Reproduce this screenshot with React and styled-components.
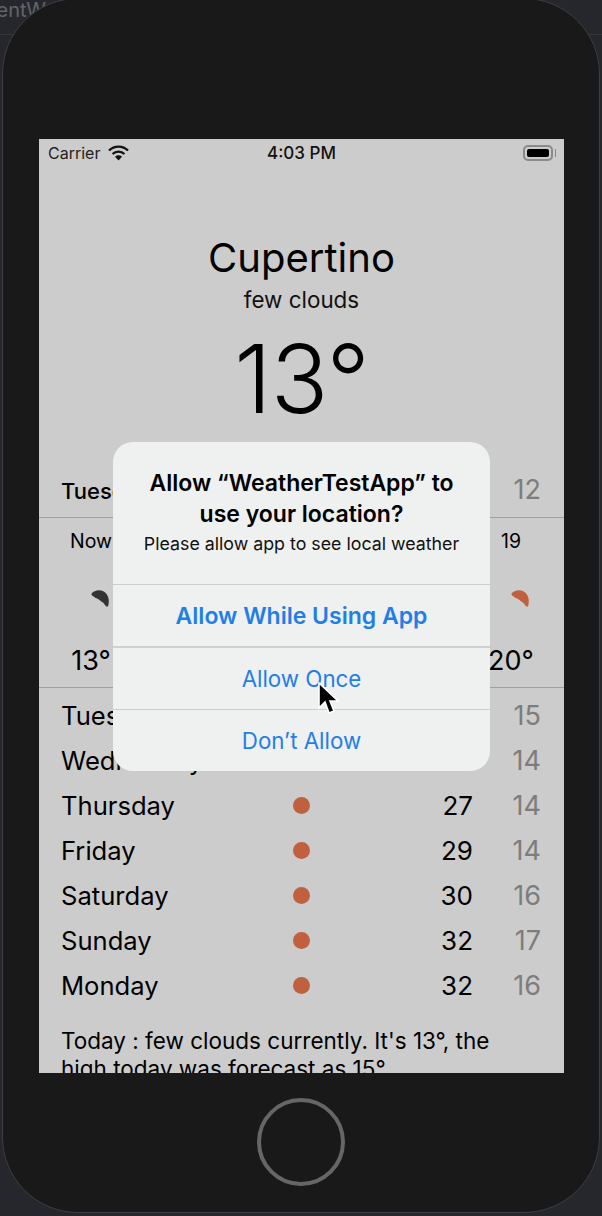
import React from "react";
import styled, { createGlobalStyle } from "styled-components";

const GlobalStyle = createGlobalStyle`
    html, body {
        margin: 0;
        padding: 0;
        background: #25272c;
    }
    * {
        box-sizing: border-box;
    }
`;

const Desktop = styled.div`
    position: relative;
    width: 602px;
    height: 1216px;
    overflow: hidden;
    background: #25272c;
    font-family: Inter, "Liberation Sans", sans-serif;
`;

const WindowTitle = styled.div`
    height: 35px;
    margin-left: -45px;
    border-bottom: 1px solid #34363b;
    color: #62656b;
    font-size: 20px;
    line-height: 21px;
    white-space: nowrap;
`;

const Phone = styled.div`
    position: absolute;
    top: -2px;
    left: 2px;
    width: 598px;
    height: 1215px;
    border: 1.5px solid #3c3e42;
    border-radius: 76px;
    background: #191919;
    display: flex;
    flex-direction: column;
    align-items: center;
    padding-top: 139.5px;
`;

const Screen = styled.div`
    position: relative;
    width: 525px;
    height: 934px;
    margin-left: 1px;
    overflow: hidden;
    background: #cccccc;
    color: #000;
`;

const StatusBar = styled.div`
    display: grid;
    grid-template-columns: 1fr auto 1fr;
    align-items: center;
    height: 28px;
    padding: 0 9px;
`;

const Carrier = styled.div`
    display: flex;
    align-items: center;
    gap: 8px;
    color: #222;
    font-size: 16px;
`;

const Clock = styled.div`
    font-size: 17px;
    font-weight: 500;
    color: #111;
`;

const Battery = styled.div`
    position: relative;
    justify-self: end;
    width: 30px;
    height: 16px;
    padding: 2px;
    border: 2px solid #8a8a8a;
    border-radius: 5px;
    margin-right: 2px;
    &::before {
        content: "";
        display: block;
        height: 100%;
        border-radius: 2px;
        background: #000;
    }
    &::after {
        content: "";
        position: absolute;
        top: 2px;
        right: -5px;
        width: 1px;
        height: 8px;
        background: #8a8a8a;
    }
`;

const Hero = styled.div`
    display: flex;
    flex-direction: column;
    align-items: center;
    padding-top: 66px;
    height: 295px;
`;

const City = styled.div`
    font-size: 40px;
    line-height: 50px;
`;

const Summary = styled.div`
    font-size: 22.4px;
    line-height: 34px;
    color: #111;
`;

const BigTemp = styled.div`
    margin-top: 3px;
    font-size: 95px;
    font-weight: 300;
    line-height: 118px;
    letter-spacing: -1px;
`;

const TodayRow = styled.div`
    display: flex;
    justify-content: space-between;
    align-items: center;
    height: 56px;
    padding: 4px 23px 0 22px;
    border-bottom: 1.5px solid #a0a0a0;
    font-size: 22px;
    font-weight: 500;
`;

const Low = styled.span`
    color: #7d7d7d;
    font-weight: 400;
    font-size: 27px;
`;

const TodayLow = styled(Low)`
    margin-bottom: 4px;
`;

const Hourly = styled.div`
    display: flex;
    justify-content: space-between;
    height: 170px;
    padding: 0 31px 0 30px;
    border-bottom: 1.5px solid #a0a0a0;
`;

const HourColumn = styled.div`
    display: flex;
    flex-direction: column;
    align-items: center;
    width: 44px;
`;

const HourLabel = styled.div`
    height: 46px;
    padding-top: 10px;
    font-size: 19.5px;
    line-height: 26px;
`;

const HourIcon = styled.svg`
    display: block;
    margin: 26px 0 0 18px;
    width: 18px;
    height: 18px;
`;

const HourTemp = styled.div`
    margin-top: 37px;
    font-size: 27px;
    line-height: 32px;
`;

const DayList = styled.div`
    padding: 5px 23px 0 22px;
`;

const DayRow = styled.div`
    display: grid;
    grid-template-columns: 1fr 80px 1fr;
    align-items: center;
    height: 45px;
    font-size: 25.6px;
`;

const DayTemps = styled.div`
    display: grid;
    grid-template-columns: 1fr 68px;
    text-align: right;
    font-size: 26px;
    align-items: center;
`;

const Dot = styled.span`
    justify-self: center;
    width: 17px;
    height: 17px;
    border-radius: 50%;
    background: #c1603f;
`;

const Forecast = styled.div`
    padding: 19px 23px 0 22px;
    font-size: 22.5px;
    line-height: 28px;
`;

const AlertBox = styled.div`
    position: absolute;
    top: 303px;
    left: 74px;
    width: 377px;
    height: 329px;
    border-radius: 20px;
    overflow: hidden;
    background: #eff0f0;
    display: flex;
    flex-direction: column;
`;

const AlertBody = styled.div`
    height: 142px;
    padding-top: 26px;
    text-align: center;
`;

const AlertTitle = styled.div`
    font-size: 23px;
    font-weight: 600;
    line-height: 31px;
    color: #000;
`;

const AlertMessage = styled.div`
    font-size: 17.8px;
    line-height: 28px;
    color: #111;
`;

const AlertButton = styled.div`
    display: flex;
    flex: 1;
    align-items: center;
    justify-content: center;
    padding-top: 1px;
    border-top: ${({ $thick }) => ($thick ? "2px solid #cfcfcf" : "1px solid #cdcdcd")};
    color: #1f7fe6;
    font-size: ${({ $strong }) => ($strong ? "23px" : "22.3px")};
    font-weight: ${({ $strong }) => ($strong ? 600 : 400)};
`;

const Cursor = styled.svg`
    position: absolute;
    top: 543px;
    left: 278px;
    width: 24px;
    height: 36px;
`;

const HomeButton = styled.div`
    width: 88px;
    height: 88px;
    margin-top: 25px;
    margin-left: -1px;
    border: 4px solid #666;
    border-radius: 50%;
`;

const days = [
    { name: "Tuesday", high: "", low: 15, hidden: true },
    { name: "Wednesday", high: "", low: 14, hidden: true },
    { name: "Thursday", high: 27, low: 14 },
    { name: "Friday", high: 29, low: 14 },
    { name: "Saturday", high: 30, low: 16 },
    { name: "Sunday", high: 32, low: 17 },
    { name: "Monday", high: 32, low: 16 },
];

const hours = [
    { label: "Now", temp: "13°", color: "#333" },
    { label: "19", temp: "20°", color: "#c1603f" },
];

function WifiIcon() {
    return (
        <svg width="21" height="16" viewBox="0 0 21 16">
            <path d="M1 5.5 A13.5 13.5 0 0 1 20 5.5" fill="none" stroke="#111" strokeWidth="2.4" />
            <path d="M4.6 9 A8.5 8.5 0 0 1 16.4 9" fill="none" stroke="#111" strokeWidth="2.4" />
            <path d="M10.5 15.5 L7 11.8 A5 5 0 0 1 14 11.8 Z" fill="#111" />
        </svg>
    );
}

function CloudBlob({ color }) {
    return (
        <HourIcon viewBox="0 0 18 18">
            <path
                d="M0.3 4 C2 1.5 5 0.3 8 0.3 C13.5 0.3 17.8 5 17.8 11 C17.8 13.5 17.5 15.5 16.5 16.8 C15 16.8 14 15 13 13.5 C11.5 12 10 11.5 8.5 10 C7 9 6 8.2 4.5 8 C3.5 7 2.5 6 1.5 6 Z"
                fill={color}
            />
        </HourIcon>
    );
}

export default function App() {
    return (
        <Desktop>
            <GlobalStyle />
            <WindowTitle>CurrentWeather</WindowTitle>
            <Phone>
                <Screen>
                    <StatusBar>
                        <Carrier>
                            Carrier
                            <WifiIcon />
                        </Carrier>
                        <Clock>4:03 PM</Clock>
                        <Battery />
                    </StatusBar>
                    <Hero>
                        <City>Cupertino</City>
                        <Summary>few clouds</Summary>
                        <BigTemp>13°</BigTemp>
                    </Hero>
                    <TodayRow>
                        <span>Tuesday</span>
                        <TodayLow>12</TodayLow>
                    </TodayRow>
                    <Hourly>
                        {hours.map((h) => (
                            <HourColumn key={h.label}>
                                <HourLabel>{h.label}</HourLabel>
                                <CloudBlob color={h.color} />
                                <HourTemp>{h.temp}</HourTemp>
                            </HourColumn>
                        ))}
                    </Hourly>
                    <DayList>
                        {days.map((d) => (
                            <DayRow key={d.name}>
                                <span>{d.name}</span>
                                {d.hidden ? <span /> : <Dot />}
                                <DayTemps>
                                    <span>{d.high}</span>
                                    <Low>{d.low}</Low>
                                </DayTemps>
                            </DayRow>
                        ))}
                    </DayList>
                    <Forecast>Today : few clouds currently. It's 13°, the high today was forecast as 15°</Forecast>
                    <AlertBox>
                        <AlertBody>
                            <AlertTitle>
                                Allow “WeatherTestApp” to
                                <br />
                                use your location?
                            </AlertTitle>
                            <AlertMessage>Please allow app to see local weather</AlertMessage>
                        </AlertBody>
                        <AlertButton $strong>Allow While Using App</AlertButton>
                        <AlertButton $thick>Allow Once</AlertButton>
                        <AlertButton>Don’t Allow</AlertButton>
                    </AlertBox>
                    <Cursor viewBox="0 0 24 36">
                        <path d="M2 1 L2 26 L8 20 L12 31 L17 29 L13 19 L21 19 Z" fill="#000" stroke="#fff" strokeWidth="1.6" />
                    </Cursor>
                </Screen>
                <HomeButton />
            </Phone>
        </Desktop>
    );
}
